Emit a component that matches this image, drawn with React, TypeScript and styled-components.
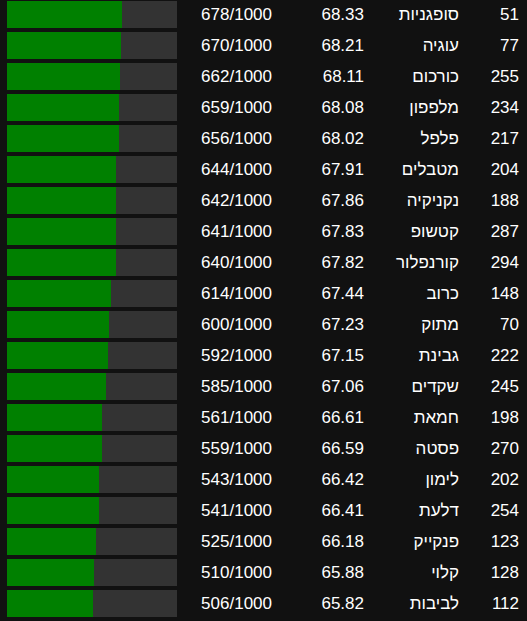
import React from "react";
import styled, { createGlobalStyle } from "styled-components";

const Global = createGlobalStyle`
  html, body { margin: 0; padding: 0; background: #111; }
  body { font-family: "Liberation Sans", Arial, sans-serif; color: #fff; }
`;

const rows: [number, string, string, number][] = [
  [51, "סופגניות", "68.33", 678],
  [77, "עוגיה", "68.21", 670],
  [255, "כורכום", "68.11", 662],
  [234, "מלפפון", "68.08", 659],
  [217, "פלפל", "68.02", 656],
  [204, "מטבלים", "67.91", 644],
  [188, "נקניקיה", "67.86", 642],
  [287, "קטשופ", "67.83", 641],
  [294, "קורנפלור", "67.82", 640],
  [148, "כרוב", "67.44", 614],
  [70, "מתוק", "67.23", 600],
  [222, "גבינת", "67.15", 592],
  [245, "שקדים", "67.06", 585],
  [198, "חמאת", "66.61", 561],
  [270, "פסטה", "66.59", 559],
  [202, "לימון", "66.42", 543],
  [254, "דלעת", "66.41", 541],
  [123, "פנקייק", "66.18", 525],
  [128, "קלוי", "65.88", 510],
  [112, "לביבות", "65.82", 506],
];

const List = styled.div`
  display: flex;
  flex-direction: column;
  gap: 4px;
  padding: 1px 8px 0 7px;
`;

const Row = styled.div`
  display: grid;
  grid-template-columns: 170px 95px 92px 95px 60px;
  height: 27px;
  align-items: center;
  font-size: 17px;
`;

const Bar = styled.div`
  height: 27px;
  background: #333;
  display: flex;
`;

const Fill = styled.div`
  height: 100%;
  background: #008000;
`;

const Cell = styled.div`
  text-align: right;
  white-space: nowrap;
`;

const Word = styled(Cell)`
  direction: rtl;
  text-align: right;
`;

export default function App() {
  return (
    <>
      <Global />
      <List>
        {rows.map(([id, word, score, val]) => (
          <Row key={id}>
            <Bar>
              <Fill style={{ width: `${(val / 1000) * 100}%` }} />
            </Bar>
            <Cell>{val}/1000</Cell>
            <Cell>{score}</Cell>
            <Word>{word}</Word>
            <Cell>{id}</Cell>
          </Row>
        ))}
      </List>
    </>
  );
}
